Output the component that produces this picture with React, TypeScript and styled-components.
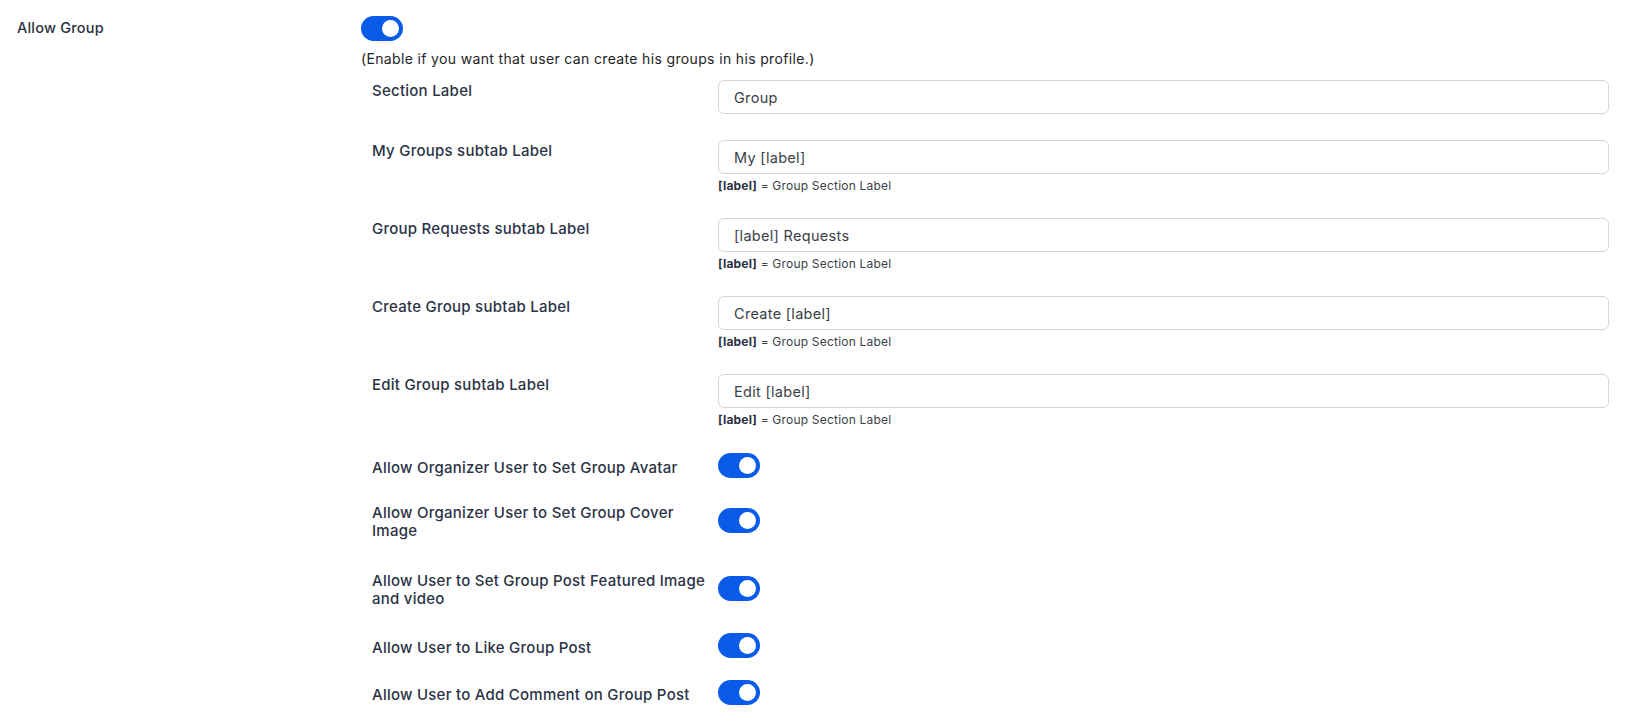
import React, { useState } from 'react'
import styled, { createGlobalStyle } from 'styled-components'

const GlobalStyle = createGlobalStyle`
  html, body {
    margin: 0;
    padding: 0;
    background: #ffffff;
  }
  body {
    font-family: Inter, "Noto Sans", "Liberation Sans", sans-serif;
    color: #2a3142;
    -webkit-font-smoothing: antialiased;
  }
`

const Page = styled.div`
  display: grid;
  grid-template-columns: 344px 1fr;
  padding: 16px 22px 0 17px;
`

const MainLabel = styled.div`
  font-size: 14.5px;
  font-weight: 500;
  letter-spacing: 0.2px;
  line-height: 24px;
  color: #2a3142;
`

const MainContent = styled.div`
  display: flex;
  flex-direction: column;
`

const Description = styled.p`
  margin: 8px 0 0;
  font-size: 14px;
  letter-spacing: 0.35px;
  line-height: 20px;
  color: #1d2327;
`

const SubSettings = styled.div`
  display: flex;
  flex-direction: column;
  padding-left: 11px;
  margin-top: 11px;
`

const Row = styled.div<{ $toggle?: boolean; $space?: number }>`
  display: grid;
  grid-template-columns: 346px 1fr;
  align-items: ${({ $toggle }) => ($toggle ? 'center' : 'start')};
  margin-top: ${({ $space }) => $space ?? 24}px;
  &:first-child {
    margin-top: 0;
  }
`

const RowLabel = styled.div<{ $toggle?: boolean }>`
  font-size: 15px;
  font-weight: 500;
  letter-spacing: 0.25px;
  line-height: 18px;
  padding-top: ${({ $toggle }) => ($toggle ? 0 : 2)}px;
  max-width: 342px;
  color: #2b3345;
`

const Field = styled.div`
  display: flex;
  flex-direction: column;
`

const TextInput = styled.input`
  box-sizing: border-box;
  width: 100%;
  height: 34px;
  padding: 0 15px;
  border: 1px solid #d3d5d9;
  border-radius: 6px;
  background: #ffffff;
  font-family: inherit;
  font-size: 14.5px;
  letter-spacing: 0.3px;
  color: #3a3f47;
  outline: none;
`

const Hint = styled.div`
  margin-top: 4px;
  font-size: 12px;
  letter-spacing: 0.2px;
  line-height: 16px;
  color: #3a3f47;

  b {
    font-weight: 700;
    color: #2a3142;
  }
`

const Switch = styled.button<{ $on: boolean }>`
  position: relative;
  width: 42px;
  height: 25px;
  padding: 0;
  border: none;
  border-radius: 13px;
  background: ${({ $on }) => ($on ? '#0a5ce8' : '#c5c9d0')};
  cursor: pointer;

  &::after {
    content: '';
    position: absolute;
    top: 4px;
    left: ${({ $on }) => ($on ? 21 : 4)}px;
    width: 17px;
    height: 17px;
    border-radius: 50%;
    background: #ffffff;
  }
`

const Toggle = ({ defaultOn = true }: { defaultOn?: boolean }) => {
  const [on, setOn] = useState(defaultOn)
  return <Switch type="button" $on={on} aria-pressed={on} onClick={() => setOn(!on)} />
}

const textFields = [
  { label: 'Section Label', value: 'Group', hint: false, space: 0 },
  { label: 'My Groups subtab Label', value: 'My [label]', hint: true, space: 26 },
  { label: 'Group Requests subtab Label', value: '[label] Requests', hint: true, space: 24 },
  { label: 'Create Group subtab Label', value: 'Create [label]', hint: true, space: 24 },
  { label: 'Edit Group subtab Label', value: 'Edit [label]', hint: true, space: 24 },
]

const toggleFields = [
  { label: 'Allow Organizer User to Set Group Avatar', space: 25 },
  { label: 'Allow Organizer User to Set Group Cover Image', space: 22 },
  { label: 'Allow User to Set Group Post Featured Image and video', space: 32 },
  { label: 'Allow User to Like Group Post', space: 25 },
  { label: 'Allow User to Add Comment on Group Post', space: 18 },
]

export default function App() {
  return (
    <>
      <GlobalStyle />
      <Page>
        <MainLabel>Allow Group</MainLabel>
        <MainContent>
          <Toggle />
          <Description>(Enable if you want that user can create his groups in his profile.)</Description>
          <SubSettings>
            {textFields.map((f) => (
              <Row key={f.label} $space={f.space}>
                <RowLabel>{f.label}</RowLabel>
                <Field>
                  <TextInput defaultValue={f.value} />
                  {f.hint && (
                    <Hint>
                      <b>[label]</b> = Group Section Label
                    </Hint>
                  )}
                </Field>
              </Row>
            ))}
            {toggleFields.map((f) => (
              <Row key={f.label} $toggle $space={f.space}>
                <RowLabel $toggle>{f.label}</RowLabel>
                <div>
                  <Toggle />
                </div>
              </Row>
            ))}
          </SubSettings>
        </MainContent>
      </Page>
    </>
  )
}
